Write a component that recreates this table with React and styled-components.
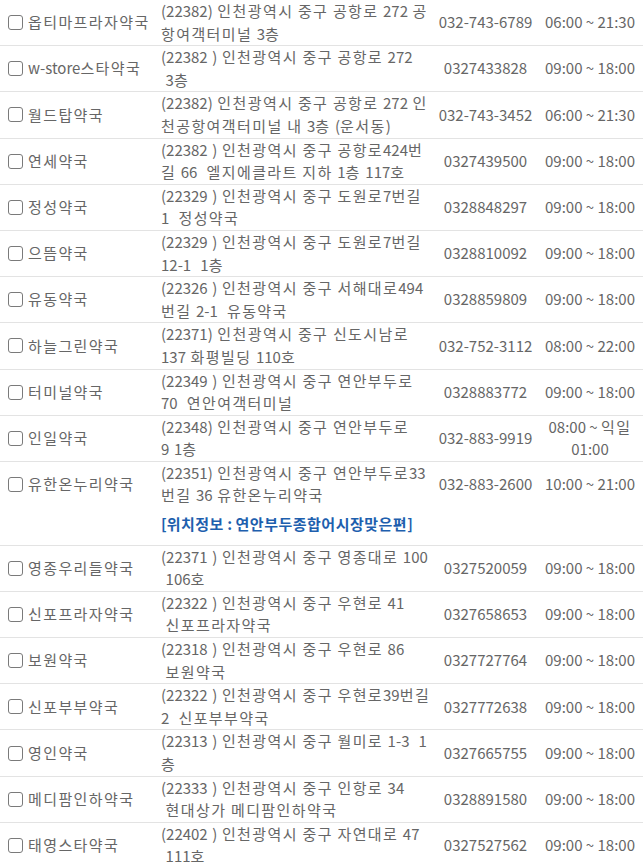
import styled, { createGlobalStyle } from "styled-components";

const GlobalStyle = createGlobalStyle`
  html, body {
    margin: 0;
    padding: 0;
    background: #fff;
  }
  body {
    font-family: "Noto Sans CJK KR", "Noto Sans", sans-serif;
  }
`;

const pharmacies = [
  { name: "옵티마프라자약국", addr: ["(22382) 인천광역시 중구 공항로 272 공", "항여객터미널 3층"], tel: "032-743-6789", hours: "06:00 ~ 21:30" },
  { name: "w-store스타약국", addr: ["(22382 ) 인천광역시 중구 공항로 272", "\u00a03층"], tel: "0327433828", hours: "09:00 ~ 18:00" },
  { name: "월드탑약국", addr: ["(22382) 인천광역시 중구 공항로 272 인", "천공항여객터미널 내 3층 (운서동)"], tel: "032-743-3452", hours: "06:00 ~ 21:30" },
  { name: "연세약국", addr: ["(22382 ) 인천광역시 중구 공항로424번", "길 66 \u00a0엘지에클라트 지하 1층 117호"], tel: "0327439500", hours: "09:00 ~ 18:00" },
  { name: "정성약국", addr: ["(22329 ) 인천광역시 중구 도원로7번길", "1 \u00a0정성약국"], tel: "0328848297", hours: "09:00 ~ 18:00" },
  { name: "으뜸약국", addr: ["(22329 ) 인천광역시 중구 도원로7번길", "12-1 \u00a01층"], tel: "0328810092", hours: "09:00 ~ 18:00" },
  { name: "유동약국", addr: ["(22326 ) 인천광역시 중구 서해대로494", "번길 2-1 \u00a0유동약국"], tel: "0328859809", hours: "09:00 ~ 18:00" },
  { name: "하늘그린약국", addr: ["(22371) 인천광역시 중구 신도시남로", "137 화평빌딩 110호"], tel: "032-752-3112", hours: "08:00 ~ 22:00" },
  { name: "터미널약국", addr: ["(22349 ) 인천광역시 중구 연안부두로", "70 \u00a0연안여객터미널"], tel: "0328883772", hours: "09:00 ~ 18:00" },
  { name: "인일약국", addr: ["(22348) 인천광역시 중구 연안부두로", "9 1층"], tel: "032-883-9919", hours: ["08:00 ~ 익일", "01:00"] },
  { name: "유한온누리약국", addr: ["(22351) 인천광역시 중구 연안부두로33", "번길 36 유한온누리약국"], tel: "032-883-2600", hours: "10:00 ~ 21:00", info: "[위치정보 : 연안부두종합어시장맞은편]" },
  { name: "영종우리들약국", addr: ["(22371 ) 인천광역시 중구 영종대로 100", "\u00a0106호"], tel: "0327520059", hours: "09:00 ~ 18:00" },
  { name: "신포프라자약국", addr: ["(22322 ) 인천광역시 중구 우현로 41", "\u00a0신포프라자약국"], tel: "0327658653", hours: "09:00 ~ 18:00" },
  { name: "보원약국", addr: ["(22318 ) 인천광역시 중구 우현로 86", "\u00a0보원약국"], tel: "0327727764", hours: "09:00 ~ 18:00" },
  { name: "신포부부약국", addr: ["(22322 ) 인천광역시 중구 우현로39번길", "2 \u00a0신포부부약국"], tel: "0327772638", hours: "09:00 ~ 18:00" },
  { name: "영인약국", addr: ["(22313 ) 인천광역시 중구 월미로 1-3 \u00a01", "층"], tel: "0327665755", hours: "09:00 ~ 18:00" },
  { name: "메디팜인하약국", addr: ["(22333 ) 인천광역시 중구 인항로 34", "\u00a0현대상가 메디팜인하약국"], tel: "0328891580", hours: "09:00 ~ 18:00" },
  { name: "태영스타약국", addr: ["(22402 ) 인천광역시 중구 자연대로 47", "\u00a0111호"], tel: "0327527562", hours: "09:00 ~ 18:00" },
];

const List = styled.div`
  width: 643px;
  color: #666;
  font-size: 15px;
  line-height: 22.6px;
`;

const Group = styled.div`
  border-bottom: 1px solid #e3e3e3;
`;

const Row = styled.div`
  display: grid;
  grid-template-columns: 157px 277px 103px 106px;
  align-items: center;
  min-height: 45.2px;
`;

const NameCell = styled.label`
  display: flex;
  align-items: center;
  gap: 5px;
  padding-left: 8px;
  white-space: nowrap;
`;

const Check = styled.input.attrs({ type: "checkbox" })`
  appearance: none;
  margin: 0;
  width: 15px;
  height: 15px;
  border: 1.5px solid #7a7a7a;
  border-radius: 3px;
  background: #fff;
  flex-shrink: 0;
`;

const AddrCell = styled.div`
  padding-left: 4px;
  white-space: nowrap;
  word-spacing: 1.2px;
`;

const CenterCell = styled.div`
  text-align: center;
  padding: 0 3px;
  white-space: nowrap;
`;

const InfoRow = styled.div`
  display: grid;
  grid-template-columns: 157px 1fr;
  padding: 6px 0 9px;
`;

const InfoText = styled.div`
  grid-column: 2;
  padding-left: 4px;
  color: #1e5fae;
  font-weight: 700;
`;

const Line = styled.span`
  display: block;
`;

// hangul runs are set a little wider, as in the original page font
const Hangul = styled.span`
  letter-spacing: ${(p) => (p.$bold ? "0.5px" : "1.4px")};
`;

const Ko = ({ text, bold }) =>
  text.split(/([가-힣]+)/).map((part, i) =>
    /[가-힣]/.test(part) ? (
      <Hangul key={i} $bold={bold}>
        {part}
      </Hangul>
    ) : (
      part
    )
  );

const Lines = ({ value }) =>
  (Array.isArray(value) ? value : [value]).map((l, i) => (
    <Line key={i}>
      <Ko text={l} />
    </Line>
  ));

export default function App() {
  return (
    <>
      <GlobalStyle />
      <List>
        {pharmacies.map((p) => (
          <Group key={p.name}>
            <Row>
              <NameCell>
                <Check />
                <span>
                  <Ko text={p.name} />
                </span>
              </NameCell>
              <AddrCell>
                <Lines value={p.addr} />
              </AddrCell>
              <CenterCell>{p.tel}</CenterCell>
              <CenterCell>
                <Lines value={p.hours} />
              </CenterCell>
            </Row>
            {p.info && (
              <InfoRow>
                <InfoText>
                  <Ko text={p.info} bold />
                </InfoText>
              </InfoRow>
            )}
          </Group>
        ))}
      </List>
    </>
  );
}
